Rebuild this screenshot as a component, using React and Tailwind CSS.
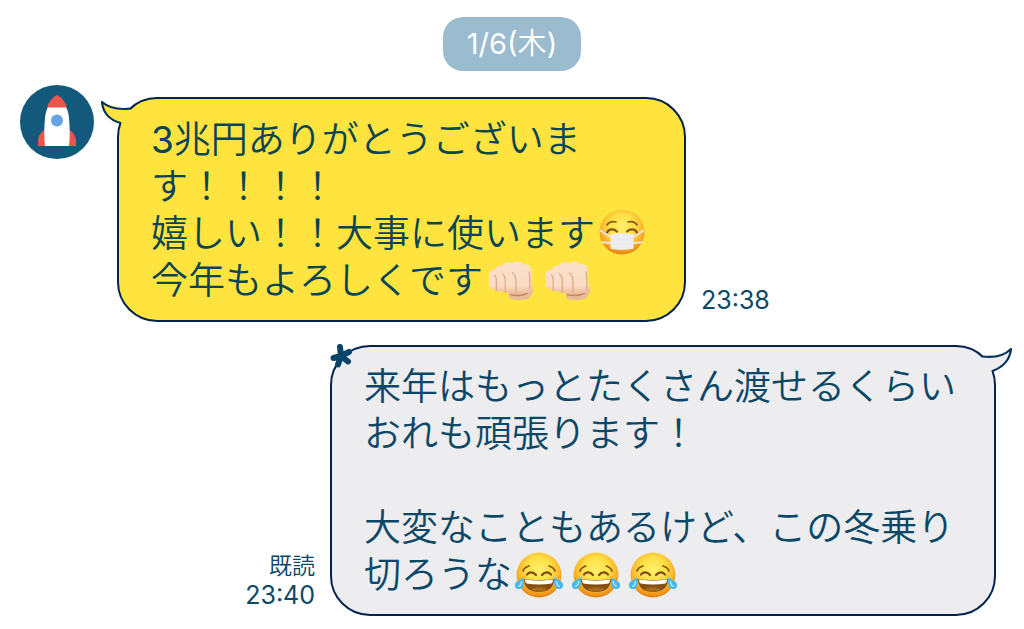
import { useId } from "react";

function RocketAvatar() {
  return (
    <svg
      viewBox="0 0 74 74"
      role="img"
      aria-label="ロケット"
      className="h-[74px] w-[74px] shrink-0"
    >
      <circle cx="37" cy="37" r="37" fill="#12597b" />
      <path d="M25 45c-4 2-7 6-7 11v5h38v-5c0-5-3-9-7-11z" fill="#ee5449" />
      <path d="M25 61c-1-8-1-17 0-28 .5-5 1.500-8 3-11h18c1.500 3 2.500 6 3 11 1 11 1 20 0 28z" fill="#fff" />
      <path d="M27 22.500c2-6 5-10 10-12.500 5 2.500 8 6.500 10 12.500z" fill="#ee5449" />
      <circle cx="37" cy="35.500" r="6" fill="#65a3e2" />
    </svg>
  );
}

function FaceBase({ id }) {
  return (
    <>
      <defs>
        <radialGradient id={id} cx="50%" cy="38%" r="62%">
          <stop offset="0" stopColor="#fff06a" />
          <stop offset="0.45" stopColor="#fedf45" />
          <stop offset="0.75" stopColor="#fcb52a" />
          <stop offset="1" stopColor="#e58010" />
        </radialGradient>
      </defs>
      <circle cx="24" cy="24" r="22.500" fill={`url(#${id})`} />
    </>
  );
}

function MaskFace() {
  const id = useId();
  return (
    <span className="flex w-[57px] justify-center pr-[3px] pb-1">
      <svg viewBox="0 0 48 48" role="img" aria-label="😷" className="h-12 w-12">
        <FaceBase id={id} />
        <g fill="none" stroke="#82571b" strokeLinecap="round">
          <path d="M9 17c2-3 5-4 9-3M30 14c4-1 7 0 9 3" strokeWidth="1.600" />
          <path d="M9 24.500c2-4 7-4 10-1M29 23.500c3-3 8-3 10 1" strokeWidth="2.200" />
        </g>
        <path
          d="M2 22c4 3 8 6 11 7M46 22c-4 3-8 6-11 7M4 34c4 1 6 1 9 1M44 34c-4 1-6 1-9 1"
          fill="none"
          stroke="#eae3e0"
          strokeWidth="2"
        />
        <path d="M14 26c6-1 14-1 20 0 1 0 1.500.5 1.500 1.500v12c0 1-.5 1.500-1.500 1.500-6 1-14 1-20 0-1 0-1.500-.5-1.500-1.500v-12c0-1 .5-1.500 1.500-1.500z" fill="#eeeef2" />
        <path d="M14 31h20M14 36h20" stroke="#e4e4ea" strokeWidth="0.800" />
      </svg>
    </span>
  );
}

function JoyFace() {
  const id = useId();
  return (
    <span className="flex w-[57px] justify-center pr-[3px]">
      <svg viewBox="0 0 50 48" role="img" aria-label="😂" className="h-12 w-[50px]">
        <g transform="translate(1 0)">
          <FaceBase id={id} />
          <g fill="none" stroke="#7c4b16" strokeLinecap="round">
            <path d="M8 20c1-3 3-4 6-5M34 15c3 1 5 2 6 5" strokeWidth="1.600" />
            <path d="M12 23.500c2-3 6-3 9 .5M27 24c3-3.500 7-3.500 9-.5" strokeWidth="2.200" />
          </g>
          <path d="M9 28c9 1.500 21 1.500 30 0 0 8-5 13-15 13S9 36 9 28z" fill="#855011" />
          <path d="M10 28.500c9 1.500 19 1.500 28 0 0 1.500-.5 3-1.500 4-8 1.200-17 1.200-25 0-1-1-1.500-2.500-1.500-4z" fill="#fff" />
          <path d="M16 38c5-2.500 11-2.500 16 0-4 3.500-12 3.500-16 0z" fill="#a86a1f" />
          <path d="M8.500 26c1 6 .5 12-4.500 12-3 0-4.500-2-4-4.500C.5 30 5 29.500 8.500 26z" fill="#43b8ee" />
          <path d="M6.500 30c.2 3-1 5-3.500 5.500" fill="none" stroke="#a5e3fb" strokeWidth="1.600" />
          <path d="M39.500 26c-1 6-.5 12 4.500 12 3 0 4.500-2 4-4.500-.5-3.500-5-4-8.500-7.500z" fill="#43b8ee" />
          <path d="M41.500 30c-.2 3 1 5 3.500 5.500" fill="none" stroke="#a5e3fb" strokeWidth="1.600" />
        </g>
      </svg>
    </span>
  );
}

function Fist() {
  const id = useId();
  return (
    <span className="flex w-[57px] justify-center">
      <svg viewBox="0 0 48 48" role="img" aria-label="👊🏻" className="h-12 w-12">
        <defs>
          <linearGradient id={id} x1="0" y1="0" x2="0" y2="1">
            <stop offset="0" stopColor="#fbe0c9" />
            <stop offset="0.75" stopColor="#fbdcc6" />
            <stop offset="1" stopColor="#ecbb9c" />
          </linearGradient>
        </defs>
        <path d="M22 34l21-12 3 11c0 3-2 6-4.500 9-6 1.500-13 1.500-19 0-.5-3-1-5-.5-8z" fill="#e9bb9d" />
        <path d="M23 37.500c5 1.500 12 1.500 18-1.500" fill="none" stroke="#c98563" strokeWidth="1.500" />
        <path
          d="M2 17c.5-3 3-5 6-4.500C9 9 12 7.500 15.500 9 17 4.500 22 4 25 6c4-2.500 9-2 12 1.500 4-1 6.500 1 7 5l.5 17c0 4-2 6-4.500 6.500-4 .8-7 .7-9.500-1-2 1.500-6 2-8.500 0-2 1.500-6 1-8-1-3 1-6 .5-7-2-3 0-5-1.500-5-4.500z"
          fill={`url(#${id})`}
        />
        <g fill="none" stroke="#dda98b" strokeLinecap="round" strokeWidth="1.300">
          <path d="M7.500 18c2 1.500 2 4 1.800 7v8" />
          <path d="M15.500 17c2.500 2 3 5 2.800 8v10" />
          <path d="M25.500 16c3 2 3.500 6 3.500 9v10" />
          <path d="M42 15c1 6 1.200 12 .3 17" />
        </g>
      </svg>
    </span>
  );
}

function LeftTail() {
  return (
    <svg viewBox="0 0 40 40" aria-hidden="true" className="absolute -top-0.5 -left-5 h-10 w-10">
      <path d="M3 5C11 12 20 13 32 12L39 20L28 32L21 26C12 24 4 16 3 5z" fill="#ffe33f" />
      <path
        d="M32 11.500C20 13 11 12 3 5C4 16 11 23 21.500 26"
        fill="none"
        stroke="#063459"
        strokeWidth="2.200"
        strokeLinejoin="round"
        strokeLinecap="round"
      />
    </svg>
  );
}

function RightTail() {
  return (
    <svg viewBox="0 0 40 40" aria-hidden="true" className="absolute -top-0.5 -right-5 h-10 w-10">
      <path d="M37 4C30 11 20 13 8 11.500L1 20L12 32L19 26C29 22 36 15 37 4z" fill="#ededf0" />
      <path
        d="M8 11.500C20 13 30 11 37 4C36 14 29 22 18.500 26"
        fill="none"
        stroke="#063459"
        strokeWidth="2.200"
        strokeLinejoin="round"
        strokeLinecap="round"
      />
    </svg>
  );
}

function Sparkle() {
  return (
    <svg viewBox="0 0 24 26" aria-hidden="true" className="absolute -top-1 -left-0.5 h-[26px] w-6">
      <g stroke="#084468" strokeWidth="6" strokeLinecap="round">
        <path d="M11 13L10 4M11 13L19 9M11 13L18 18.500M11 13L8 21.500M11 13L3.500 15" />
      </g>
    </svg>
  );
}

function Line({ children }) {
  return <span className="flex h-[47px] items-center whitespace-nowrap">{children}</span>;
}

export default function App() {
  return (
    <main className="flex flex-col bg-white pt-[17px] pb-3 font-['Inter','Noto_Sans_CJK_JP',sans-serif] font-[350] text-[#0b4767]">
      <h1 className="flex h-[54px] items-center self-center rounded-[20px] bg-[#9bbbce] px-6 text-[29px] font-[350] text-white">
        <span className="font-normal">1/6(</span>木<span className="font-normal">)</span>
      </h1>

      <section className="mt-3.5 flex items-start pl-5">
        <RocketAvatar />
        <div className="mt-3 ml-[23px] flex items-end gap-[15px]">
          <div className="relative rounded-[40px] border-2 border-[#00234d] bg-[#ffe33f] px-8 pt-[17px] pb-4 text-[37px] text-[#0a4555]">
            <LeftTail />
            <p>
              <Line>
                <span className="font-normal">3</span>兆円ありがとうございま
              </Line>
              <Line>す！！！！</Line>
              <Line>
                嬉しい！！大事に使います
                <MaskFace />
              </Line>
              <Line>
                今年もよろしくです
                <Fist />
                <Fist />
              </Line>
            </p>
          </div>
          <time className="pb-[7px] text-[25px] leading-[29px] font-normal">23:38</time>
        </div>
      </section>

      <section className="mt-[23px] flex items-end justify-end gap-[15px] pr-7">
        <div className="flex flex-col items-end pb-1.5 text-[25px] leading-[29px]">
          <span className="text-[23px]">既読</span>
          <time className="font-normal">23:40</time>
        </div>
        <div className="relative rounded-[40px] border-2 border-[#00234d] bg-[#ededf0] py-4 pr-[38px] pl-8 text-[37px]">
          <RightTail />
          <Sparkle />
          <p>
            <Line>来年はもっとたくさん渡せるくらい</Line>
            <Line>おれも頑張ります！</Line>
            <Line />
            <Line>大変なこともあるけど、この冬乗り</Line>
            <Line>
              切ろうな
              <JoyFace />
              <JoyFace />
              <JoyFace />
            </Line>
          </p>
        </div>
      </section>
    </main>
  );
}
